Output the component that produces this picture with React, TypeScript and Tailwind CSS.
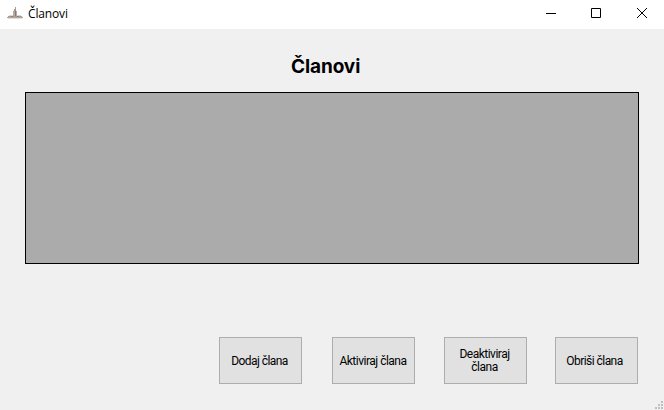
import React from "react";

function AppIcon() {
  return (
    <svg className="h-4 w-4 shrink-0" viewBox="0 0 16 16" shapeRendering="crispEdges">
      <path d="M8 1h1v2H8z" fill="#a79d95" />
      <path d="M7 3h2v3H7z" fill="#a0968d" />
      <path d="M6 5h4v5H6z" fill="#b5aaa1" />
      <path d="M8 5h1v5H8z" fill="#857b73" />
      <path d="M2 9h4v1H2zM10 9h4v1h-4z" fill="#ddd6d0" />
      <path d="M1 10h14v1H1z" fill="#a89e96" />
      <path d="M0 11h16v1H0z" fill="#b0a69e" />
      <path d="M1 12h14v1H1z" fill="#e3dcd7" />
      <path d="M4 10h2v1H4zM10 10h2v1h-2z" fill="#8b8179" />
    </svg>
  );
}

const captionIcons = [
  <path key="min" d="M0 5.5h10" />,
  <path key="max" d="M.5 .5h9v9h-9z" />,
  <path key="close" d="M0 0L10 10M10 0L0 10" />,
];

function TitleBar() {
  return (
    <header className="flex h-[29px] shrink-0 items-start bg-white pl-[7px]">
      <div className="flex h-[27px] items-center gap-[5px]">
        <AppIcon />
        <h1 className="w-10 whitespace-nowrap font-['Open_Sans','Noto_Sans',sans-serif] text-[12px] leading-4 tracking-[-0.15px] text-black">
          Članovi
        </h1>
      </div>
      <div className="ml-auto flex">
        {captionIcons.map((icon, i) => (
          <button
            key={i}
            className="flex h-[26px] w-[46px] items-center justify-center first:w-[45px] last:w-[45px] last:pl-[1px]"
          >
            <svg className="h-[10px] w-[10px] overflow-visible" viewBox="0 0 10 10" fill="none" stroke="#000">
              {icon}
            </svg>
          </button>
        ))}
      </div>
    </header>
  );
}

function ActionButton({ label, className }: { label: string; className: string }) {
  return (
    <button
      className={`flex h-[47px] w-[83px] shrink-0 items-center justify-center border border-[#adadad] bg-[#e1e1e1] text-center font-['Roboto','Liberation_Sans',sans-serif] text-[12px] leading-[13px] text-black ${className}`}
    >
      <span>{label}</span>
    </button>
  );
}

function SizeGrip() {
  return (
    <svg className="absolute right-[1px] bottom-[1px] h-2 w-2" viewBox="0 0 8 8" fill="#bfbfbf">
      <path d="M6 0h2v2H6zM3 3h2v2H3zM6 3h2v2H6zM0 6h2v2H0zM3 6h2v2H3zM6 6h2v2H6z" />
    </svg>
  );
}

export default function App() {
  return (
    <div className="relative flex h-[410px] w-[664px] flex-col overflow-hidden bg-[#f0f0f0]">
      <TitleBar />
      <main className="flex flex-col pt-[26px] pr-[25px] pl-[25px]">
        <h2 className="ml-[266px] h-6 font-['Inter','Liberation_Sans',sans-serif] text-[19px] leading-6 font-bold tracking-[-0.1px] text-black">
          Članovi
        </h2>
        <div className="mt-[13px] h-[172px] w-[614px] border border-black bg-[#ababab]" />
        <div className="mt-[73px] flex pl-[194px]">
          <ActionButton label="Dodaj člana" className="pt-[2px] pr-[2px] tracking-[-0.55px]" />
          <ActionButton label="Aktiviraj člana" className="ml-[30px] pt-[2px] pr-[1px] tracking-[-0.5px]" />
          <ActionButton label="Deaktiviraj člana" className="ml-[29px] pr-[14px] pl-3 tracking-[-0.5px]" />
          <ActionButton label="Obriši člana" className="ml-[28px] pt-[2px] pr-[4px] tracking-[-0.55px]" />
        </div>
      </main>
      <SizeGrip />
    </div>
  );
}
